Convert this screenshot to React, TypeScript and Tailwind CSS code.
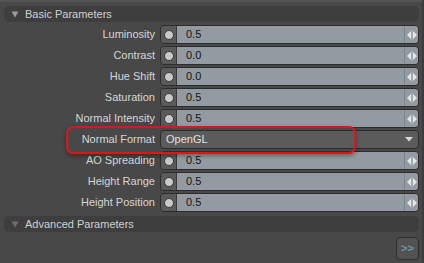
import React from "react";

const rows: { label: string; value: string; dropdown?: boolean }[] = [
  { label: "Luminosity", value: "0.5" },
  { label: "Contrast", value: "0.0" },
  { label: "Hue Shift", value: "0.0" },
  { label: "Saturation", value: "0.5" },
  { label: "Normal Intensity", value: "0.5" },
  { label: "Normal Format", value: "OpenGL", dropdown: true },
  { label: "AO Spreading", value: "0.5" },
  { label: "Height Range", value: "0.5" },
  { label: "Height Position", value: "0.5" },
];

function Tri({ dim }: { dim?: boolean }) {
  return (
    <svg width="8" height="7" viewBox="0 0 8 7" className="mr-[6px]">
      <path d="M0.5 0.5 L7.5 0.5 L4 6.5 Z" fill={dim ? "#6f6f6f" : "#9a9a9a"} />
    </svg>
  );
}

function Header({ title, dim }: { title: string; dim?: boolean }) {
  return (
    <div className="flex h-[16px] items-center rounded-[5px] bg-[#3e3e3e] pl-[7px] text-[11px] text-[#d0d0d0]">
      <Tri dim={dim} />
      <span className="leading-none">{title}</span>
    </div>
  );
}

function Spinner() {
  return (
    <svg width="12" height="10" viewBox="0 0 12 10">
      <path d="M5 1 L5 9 L1 5 Z" fill="#e4e6e8" />
      <path d="M7 1 L7 9 L11 5 Z" fill="#e4e6e8" />
      <rect x="5.6" y="0" width="0.8" height="10" fill="#b9bec3" />
    </svg>
  );
}

function Field({ value }: { value: string }) {
  return (
    <div className="flex h-[19px] flex-1 overflow-hidden rounded-[4px] border border-[#2c2c2c]">
      <div className="flex w-[15px] items-center justify-center bg-[#5a5a5a]">
        <div className="h-[10px] w-[10px] rounded-full border border-[#3a3a3a] bg-[#c9c9c9]" />
      </div>
      <div className="flex flex-1 items-center border-l border-[#3a3a3a] bg-[#939aa1] pl-[9px] text-[11px] text-[#151515]">
        {value}
      </div>
      <div className="flex w-[14px] items-center justify-center border-l border-[#7d848b] bg-[#939aa1]">
        <Spinner />
      </div>
    </div>
  );
}

function Dropdown({ value }: { value: string }) {
  return (
    <div className="flex h-[19px] flex-1 items-center rounded-[4px] border border-[#2c2c2c] bg-[#5b5b5b] pl-[5px] pr-[5px] text-[11px] text-[#e0e0e0]">
      <span className="flex-1">{value}</span>
      <svg width="8" height="5" viewBox="0 0 8 5">
        <path d="M0 0 L8 0 L4 4.5 Z" fill="#d8d8d8" />
      </svg>
    </div>
  );
}

export default function App() {
  return (
    <div
      className="relative h-[263px] w-[424px] overflow-hidden bg-[#484848]"
      style={{ fontFamily: '"Liberation Sans", Arial, sans-serif' }}
    >
      <div className="h-[2px] bg-[#545454]" />
      <div className="flex flex-col pl-[4px] pr-[5px] pt-[4px]">
        <Header title="Basic Parameters" />
        <div className="mt-[3px] flex flex-col gap-[2px]">
          {rows.map((r) => (
            <div key={r.label} className="flex items-center">
              <div className="w-[152px] pr-[1px] text-right text-[11px] text-[#d6d6d6]">{r.label}</div>
              <div className="ml-[4px] flex flex-1">
                {r.dropdown ? <Dropdown value={r.value} /> : <Field value={r.value} />}
              </div>
            </div>
          ))}
        </div>
        <div className="mt-[4px]">
          <Header title="Advanced Parameters" dim />
        </div>
        <div className="mt-[5px] flex justify-end">
          <div className="flex h-[23px] w-[23px] items-center justify-center rounded-[4px] border border-[#2e2e2e] bg-[#525252] text-[11px] font-bold text-[#6f95ad]">
            &gt;&gt;
          </div>
        </div>
      </div>
      <div className="absolute right-0 top-0 h-full w-[2px] bg-[#3c3c3c]" />
      <div className="pointer-events-none absolute left-[66px] top-[126px] h-[28px] w-[290px] rounded-[7px] border-2 border-[#e0141a] shadow-[0_2px_4px_rgba(0,0,0,0.35)]" />
    </div>
  );
}
